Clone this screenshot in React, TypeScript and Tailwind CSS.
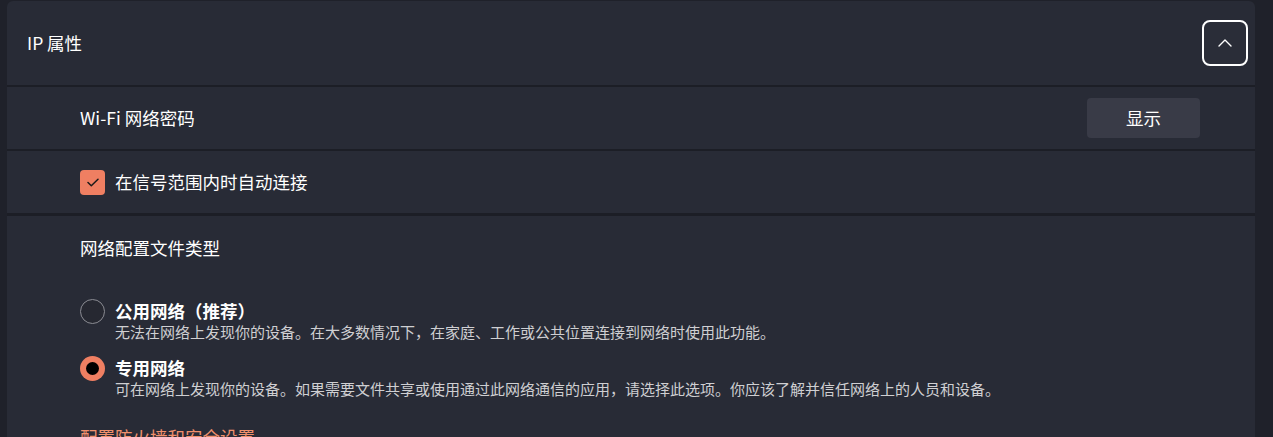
import React from "react";

const FONT = { fontFamily: '"Noto Sans CJK SC", "Noto Sans", sans-serif' };

function Divider({ h }: { h: string }) {
  return <div className={`${h} shrink-0 bg-[#1c1e26]`} />;
}

function Radio({ checked }: { checked: boolean }) {
  if (checked) {
    return (
      <span className="mt-[-1px] flex h-[25px] w-[25px] shrink-0 items-center justify-center rounded-full bg-[#ef7f62]">
        <span className="h-[13px] w-[13px] rounded-full bg-black" />
      </span>
    );
  }
  return <span className="mt-[-1px] h-[25px] w-[25px] shrink-0 rounded-full border-[1.5px] border-[#8b8c93] bg-[#262831]" />;
}

function ProfileOption({ checked, title, desc }: { checked: boolean; title: string; desc: string }) {
  return (
    <div className="flex gap-[10px]">
      <Radio checked={checked} />
      <div className="flex flex-col">
        <span className="text-[17.5px] font-bold leading-[22px] text-white">{title}</span>
        <span className="text-[15px] leading-[20px] text-[#cfcfd2]">{desc}</span>
      </div>
    </div>
  );
}

export default function App() {
  return (
    <div className="flex h-[437px] w-[1273px] overflow-hidden bg-[#1f212a] pt-[1px] pl-[7px]" style={FONT}>
      <div className="flex w-[1248px] flex-col rounded-t-md bg-[#282b36]">
        <div className="flex h-[84px] shrink-0 items-center justify-between pl-[20px] pr-[7px]">
          <span className="text-[17.5px] text-white">IP 属性</span>
          <button className="flex h-[46px] w-[46px] items-center justify-center rounded-[8px] border-2 border-white bg-[#2a2d38]">
            <svg width="14" height="8" viewBox="0 0 14 8" fill="none">
              <path d="M1 7L7 1L13 7" stroke="white" strokeWidth="1.4" strokeLinecap="round" strokeLinejoin="round" />
            </svg>
          </button>
        </div>
        <Divider h="h-[2px]" />
        <div className="flex h-[62px] shrink-0 items-center justify-between pl-[73px] pr-[55px]">
          <span className="text-[17.5px] text-white">Wi-Fi 网络密码</span>
          <button className="h-[40px] w-[113px] rounded-[4px] bg-[#393b47] text-[17.5px] text-white">显示</button>
        </div>
        <Divider h="h-[2px]" />
        <div className="flex h-[62px] shrink-0 items-center gap-[10px] pl-[73px]">
          <span className="flex h-[25px] w-[25px] items-center justify-center rounded-[4px] bg-[#ef7f62]">
            <svg width="12" height="9" viewBox="0 0 12 9" fill="none">
              <path d="M1 4.5L4.3 7.8L11 1.2" stroke="#1a1a1a" strokeWidth="1.5" strokeLinecap="round" strokeLinejoin="round" />
            </svg>
          </span>
          <span className="text-[17.5px] text-white">在信号范围内时自动连接</span>
        </div>
        <Divider h="h-[3px]" />
        <div className="flex shrink-0 flex-col pl-[73px] pt-[21px]">
          <span className="text-[17.5px] leading-[22px] text-white">网络配置文件类型</span>
          <div className="mt-[41px] flex flex-col gap-[15px]">
            <ProfileOption
              checked={false}
              title="公用网络（推荐）"
              desc="无法在网络上发现你的设备。在大多数情况下，在家庭、工作或公共位置连接到网络时使用此功能。"
            />
            <ProfileOption
              checked
              title="专用网络"
              desc="可在网络上发现你的设备。如果需要文件共享或使用通过此网络通信的应用，请选择此选项。你应该了解并信任网络上的人员和设备。"
            />
          </div>
          <a className="mt-[27px] text-[17.5px] leading-[22px] text-[#f0906c]">配置防火墙和安全设置</a>
        </div>
      </div>
    </div>
  );
}
